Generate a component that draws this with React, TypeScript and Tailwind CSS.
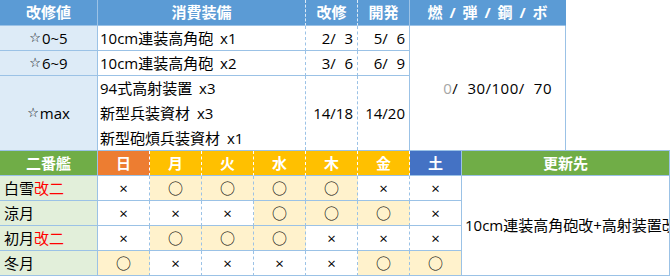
import React from "react";

const font = "font-['Open_Sans','Noto_Sans_CJK_JP',sans-serif]";

function Pad({ v }: { v: number }) {
  return v < 10 ? (
    <>
      <span className="invisible">0</span>
      {v}
    </>
  ) : (
    <>{v}</>
  );
}

function Pair({ a, b }: { a: number; b: number }) {
  return (
    <span className="whitespace-pre">
      <Pad v={a} />/<Pad v={b} />
    </span>
  );
}

function Star() {
  return <span className="font-['DejaVu_Sans',sans-serif] text-[13px] mr-[1px]">☆</span>;
}

const topRows = [
  { lv: "0~5", items: ["10cm連装高角砲 x1"], kai: [2, 3], dev: [5, 6] },
  { lv: "6~9", items: ["10cm連装高角砲 x2"], kai: [3, 6], dev: [6, 9] },
  {
    lv: "max",
    items: ["94式高射装置 x3", "新型兵装資材 x3", "新型砲熕兵装資材 x1"],
    kai: [14, 18],
    dev: [14, 20],
  },
];

const ships: { base: string; kai?: string; days: string }[] = [
  { base: "白雪", kai: "改二", days: "XOOOOXX" },
  { base: "涼月", days: "XXXOOOX" },
  { base: "初月", kai: "改二", days: "XOOOXXX" },
  { base: "冬月", days: "OXXXXOO" },
];

const dayHeads = [
  { d: "日", bg: "bg-[#ed7d31]", last: false },
  { d: "月", bg: "bg-[#ffc000]", last: false },
  { d: "火", bg: "bg-[#ffc000]", last: false },
  { d: "水", bg: "bg-[#ffc000]", last: false },
  { d: "木", bg: "bg-[#ffc000]", last: false },
  { d: "金", bg: "bg-[#ffc000]", last: false },
  { d: "土", bg: "bg-[#4472c4]", last: true },
];

export default function App() {
  return (
    <div className={`w-[670px] h-[276px] overflow-hidden bg-white text-[15px] text-black ${font}`}>
      {/* top table */}
      <div className="grid w-[566px] grid-cols-[98px_208px_52px_52px_156px] grid-rows-[26px_25px_25px_74px]">
        <div className="flex items-center justify-center bg-[#5b9bd5] border-b border-r border-[#9bc2e6] font-bold text-white">
          改修値
        </div>
        <div className="flex items-center justify-center bg-[#5b9bd5] border-b border-r border-b-[#9bc2e6] border-r-[#ddebf7] [border-right-style:dashed] font-bold text-white">
          消費装備
        </div>
        <div className="flex items-center justify-center bg-[#5b9bd5] border-b border-r border-b-[#9bc2e6] border-r-[#ddebf7] [border-right-style:dashed] font-bold text-white">
          改修
        </div>
        <div className="flex items-center justify-center bg-[#5b9bd5] border-b border-r border-[#9bc2e6] font-bold text-white">
          開発
        </div>
        <div className="flex items-center justify-center bg-[#5b9bd5] border-b border-r border-b-[#9bc2e6] border-r-[#5b9bd5] font-bold text-white whitespace-pre [word-spacing:3px]">
          燃 / 弾 / 鋼 / ボ
        </div>

        {topRows.map((r, i) => {
          const last = i === topRows.length - 1;
          const bb = last ? "" : "border-b";
          return (
            <React.Fragment key={r.lv}>
              <div className={`flex items-center justify-center bg-[#ddebf7] border-r ${bb} border-[#9bc2e6]`}>
                <Star />
                {r.lv}
              </div>
              <div
                className={`flex flex-col justify-center pl-[2px] border-r ${bb} border-[#9bc2e6] [border-right-style:dashed] whitespace-nowrap [word-spacing:3px]`}
              >
                {r.items.map((t) => (
                  <div key={t} className="h-[25px] leading-[25px] flex items-center">
                    {t}
                  </div>
                ))}
              </div>
              <div
                className={`flex items-center justify-end pr-[4px] border-r ${bb} border-[#9bc2e6] [border-right-style:dashed]`}
              >
                <Pair a={r.kai[0]} b={r.kai[1]} />
              </div>
              <div className={`flex items-center justify-end pr-[4px] border-r ${bb} border-[#9bc2e6]`}>
                <Pair a={r.dev[0]} b={r.dev[1]} />
              </div>
              {i === 0 && (
                <div className="row-span-3 flex items-center justify-end pr-[13px] border-r border-[#9bc2e6] whitespace-pre tracking-[0.5px]">
                  <span className="text-[#a6a6a6]">0</span>/<span className="invisible">0</span>30/100/
                  <span className="invisible">0</span>70
                </div>
              )}
            </React.Fragment>
          );
        })}
      </div>

      {/* bottom table */}
      <div className="grid w-[670px] grid-cols-[98px_52px_52px_52px_52px_52px_52px_52px_208px] grid-rows-[25px_25px_25px_25px_25px] border-t border-[#9bc2e6]">
        <div className="flex items-center justify-center bg-[#70ad47] border-b border-r border-[#9bc2e6] font-bold text-white">
          二番艦
        </div>
        {dayHeads.map((h) => (
          <div
            key={h.d}
            className={
              h.last
                ? `flex items-center justify-center ${h.bg} border-b border-r border-[#9bc2e6] font-bold text-white`
                : `flex items-center justify-center ${h.bg} border-b border-r border-b-[#9bc2e6] border-r-white [border-right-style:dashed] font-bold text-white`
            }
          >
            {h.d}
          </div>
        ))}
        <div className="flex items-center justify-center bg-[#70ad47] border-b border-r border-[#9bc2e6] font-bold text-white">
          更新先
        </div>

        {ships.map((s, i) => (
          <React.Fragment key={s.base}>
            <div className="flex items-center pl-[4px] bg-[#e2efda] border-b border-r border-[#9bc2e6] whitespace-nowrap">
              {s.base}
              {s.kai && <span className="text-[#ff0000]">{s.kai}</span>}
            </div>
            {s.days.split("").map((c, j) => {
              const ok = c === "O";
              const style = j === 6 ? "" : "[border-right-style:dashed]";
              return (
                <div
                  key={j}
                  className={`flex items-center justify-center border-b border-r border-[#9bc2e6] ${style} ${
                    ok ? "bg-[#fff2cc]" : "bg-white"
                  }`}
                >
                  {ok ? "○" : "×"}
                </div>
              );
            })}
            {i === 0 && (
              <div className="row-span-4 flex items-center pl-[3px] border-b border-r border-[#9bc2e6] overflow-hidden whitespace-nowrap">
                10cm連装高角砲改+高射装置改
              </div>
            )}
          </React.Fragment>
        ))}
      </div>
    </div>
  );
}
